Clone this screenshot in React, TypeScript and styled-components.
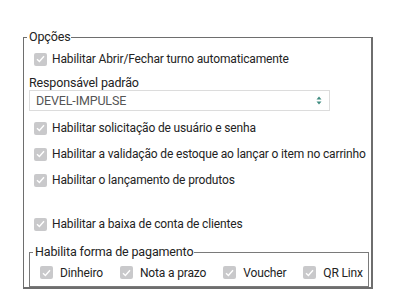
import styled, { createGlobalStyle } from 'styled-components';

const GlobalStyle = createGlobalStyle`
  html, body {
    margin: 0;
    padding: 0;
    background: #ffffff;
  }
  body {
    font-family: Roboto, "Liberation Sans", sans-serif;
    font-size: 12px;
    letter-spacing: -0.15px;
    color: #232323;
    white-space: nowrap;
  }
`;

const Page = styled.div`
  width: 414px;
  height: 306px;
  padding: 30px 0 0 23px;
  box-sizing: border-box;
`;

const Group = styled.fieldset<{ $inner?: boolean }>`
  margin: ${(p) => (p.$inner ? '8px 0 0 5px' : '0')};
  padding: 0;
  width: ${(p) => (p.$inner ? '340px' : '350px')};
  box-sizing: border-box;
  border: 1px solid ${(p) => (p.$inner ? '#7a7a7a' : '#6e6e6e')};
  border-bottom-width: ${(p) => (p.$inner ? '1px' : '2px')};
  border-right-width: ${(p) => (p.$inner ? '1px' : '2px')};
`;

const Legend = styled.legend`
  padding: 0 1px 0 2px;
  margin-left: 3px;
  line-height: 14px;
  font-size: 12.5px;
`;

const Content = styled.div`
  display: flex;
  flex-direction: column;
  padding-top: 2px;
`;

const CheckRow = styled.label<{ $space?: number }>`
  display: flex;
  align-items: center;
  gap: 5px;
  height: 26px;
  padding-left: 10px;
  margin-top: ${(p) => p.$space ?? 0}px;
`;

const Box = styled.span`
  width: 13px;
  height: 13px;
  border-radius: 2px;
  background: #c9c9cb;
  display: inline-flex;
  align-items: center;
  justify-content: center;
  flex: none;
`;

const FieldLabel = styled.div`
  margin: 4px 0 0 5px;
  line-height: 14px;
  font-size: 12.5px;
`;

const Select = styled.div`
  margin: 0 0 4px 5px;
  width: 301px;
  height: 21px;
  box-sizing: border-box;
  border: 1px solid #dcdcdc;
  display: flex;
  align-items: center;
  justify-content: space-between;
  padding: 0 7px 0 6px;
  font-size: 12.5px;
  color: #555555;
`;

const PayRow = styled.div`
  display: flex;
  align-items: center;
  gap: 17px;
  height: 27px;
  padding-left: 10px;
`;

const PayItem = styled.label`
  display: flex;
  align-items: center;
  gap: 7px;
`;

function Check() {
  return (
    <Box>
      <svg width="9" height="8" viewBox="0 0 9 8">
        <path d="M1 4.2 L3.4 6.5 L8 1.3" fill="none" stroke="#ffffff" strokeWidth="1.4" />
      </svg>
    </Box>
  );
}

function Arrows() {
  return (
    <svg width="6" height="9" viewBox="0 0 6 9">
      <path d="M3 0.5 L5.5 3.5 H0.5 Z" fill="#3f8c80" />
      <path d="M3 8.5 L5.5 5.5 H0.5 Z" fill="#3f8c80" />
    </svg>
  );
}

export default function App() {
  return (
    <Page>
      <GlobalStyle />
      <Group>
        <Legend>Opções</Legend>
        <Content>
          <CheckRow><Check />Habilitar Abrir/Fechar turno automaticamente</CheckRow>
          <FieldLabel>Responsável padrão</FieldLabel>
          <Select>
            <span>DEVEL-IMPULSE</span>
            <Arrows />
          </Select>
          <CheckRow><Check />Habilitar solicitação de usuário e senha</CheckRow>
          <CheckRow><Check />Habilitar a validação de estoque ao lançar o item no carrinho</CheckRow>
          <CheckRow><Check />Habilitar o lançamento de produtos</CheckRow>
          <CheckRow $space={18}><Check />Habilitar a baixa de conta de clientes</CheckRow>
          <Group $inner>
            <Legend>Habilita forma de pagamento</Legend>
            <PayRow>
              <PayItem><Check />Dinheiro</PayItem>
              <PayItem><Check />Nota a prazo</PayItem>
              <PayItem><Check />Voucher</PayItem>
              <PayItem><Check />QR Linx</PayItem>
            </PayRow>
          </Group>
        </Content>
      </Group>
    </Page>
  );
}
